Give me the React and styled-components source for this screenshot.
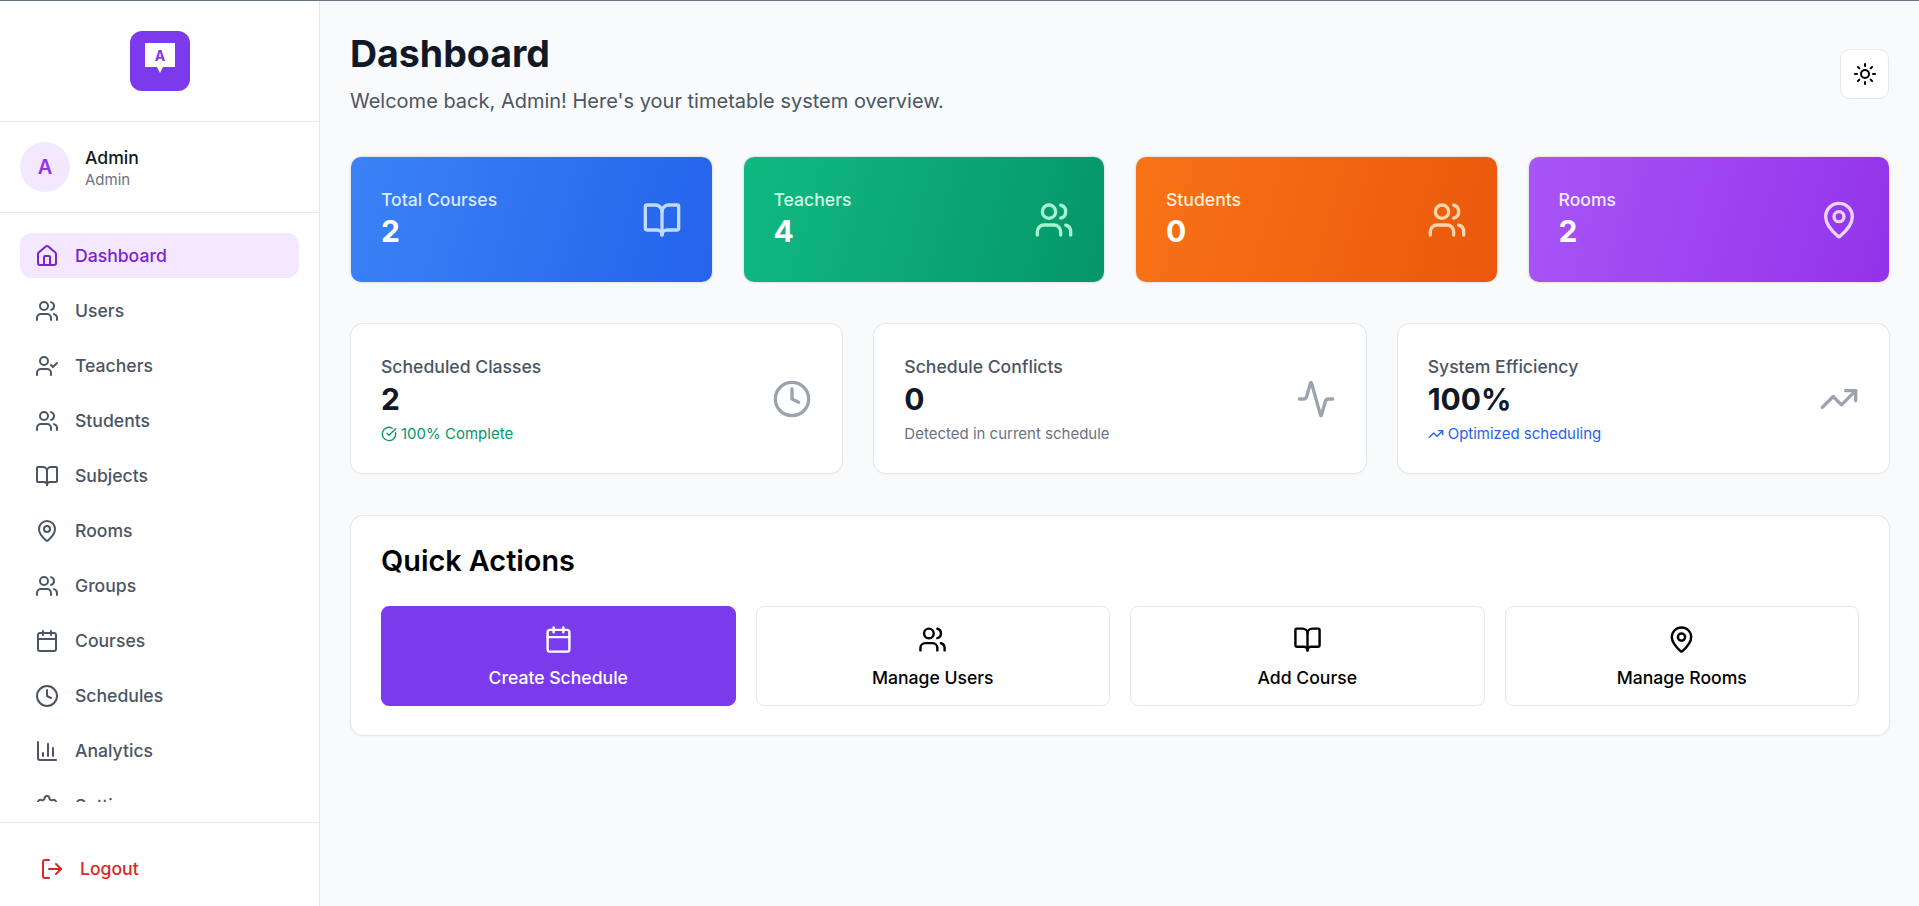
import React from "react";
import styled, { createGlobalStyle } from "styled-components";
import {
  House,
  Users,
  UserCheck,
  BookOpen,
  MapPin,
  Calendar,
  Clock,
  ChartColumn,
  Settings,
  LogOut,
  Sun,
  CircleCheckBig,
  Activity,
  TrendingUp,
} from "lucide-react";

const GlobalStyle = createGlobalStyle`
  * { box-sizing: border-box; }
  html, body { margin: 0; padding: 0; height: 100%; }
  body {
    font-family: "Inter", "Liberation Sans", sans-serif;
    background: #f9fafb;
    color: #111827;
    overflow: hidden;
  }
`;

const Layout = styled.div`
  display: flex;
  height: 906px;
  border-top: 1px solid #6b7280;
`;

const Sidebar = styled.aside`
  width: 320px;
  flex-shrink: 0;
  display: flex;
  flex-direction: column;
  background: #fff;
  border-right: 1px solid #e5e7eb;
`;

const LogoBlock = styled.div`
  height: 121px;
  padding-left: 1px;
  display: flex;
  align-items: center;
  justify-content: center;
  border-bottom: 1px solid #e5e7eb;
`;

const LogoMark = styled.div`
  width: 60px;
  height: 60px;
  border-radius: 12px;
  background: #7c3aed;
  display: flex;
  align-items: center;
  justify-content: center;
`;

const Bubble = styled.div`
  position: relative;
  width: 30px;
  height: 24px;
  margin-bottom: 12px;
  background: #fff;
  color: #7c3aed;
  font-size: 14px;
  font-weight: 700;
  line-height: 26px;
  text-align: center;

  &::after {
    content: "";
    position: absolute;
    left: 12px;
    top: 24px;
    border-left: 3px solid transparent;
    border-right: 3px solid transparent;
    border-top: 6px solid #fff;
  }
`;

const UserBlock = styled.div`
  height: 91px;
  padding: 0 20px;
  display: flex;
  align-items: center;
  gap: 15px;
  border-bottom: 1px solid #e5e7eb;
`;

const Avatar = styled.div`
  width: 50px;
  height: 50px;
  border-radius: 50%;
  background: #f3e8ff;
  color: #9333ea;
  font-size: 20px;
  font-weight: 600;
  display: flex;
  align-items: center;
  justify-content: center;
`;

const UserText = styled.div`
  padding-top: 2px;
`;

const UserName = styled.div`
  font-size: 17.6px;
  font-weight: 500;
  line-height: 24px;
  color: #111827;
`;

const UserRole = styled.div`
  font-size: 15px;
  line-height: 20px;
  color: #6b7280;
`;

const Nav = styled.nav`
  flex: 1;
  min-height: 0;
  margin-bottom: 20px;
  padding: 20px 20px 0;
  overflow: hidden;
  display: flex;
  flex-direction: column;
  gap: 10px;
`;

const NavItem = styled.a`
  flex-shrink: 0;
  height: 45px;
  padding: 0 15px;
  display: flex;
  align-items: center;
  gap: 16px;
  border-radius: 12px;
  font-size: 17.6px;
  font-weight: 500;
  background: ${(p) => (p.$active ? "#f3e8ff" : "transparent")};
  color: ${(p) => (p.$active ? "#7e22ce" : "#4b5563")};
`;

const SidebarFooter = styled.div`
  height: 84px;
  padding: 8px 40px 0;
  display: flex;
  align-items: center;
  gap: 16px;
  border-top: 1px solid #e5e7eb;
  color: #dc2626;
  font-size: 17.6px;
  font-weight: 500;
`;

const Main = styled.main`
  flex: 1;
  min-width: 0;
  padding: 30px 30px 30px 31px;
  display: flex;
  flex-direction: column;
`;

const PageHead = styled.header`
  height: 86px;
  display: flex;
  align-items: center;
  justify-content: space-between;
  margin-bottom: 40px;
`;

const HeadText = styled.div`
  margin-left: -1px;
  padding-bottom: 4px;
`;

const Title = styled.h1`
  margin: 0 0 12px;
  font-size: 37.5px;
  font-weight: 700;
  line-height: 46px;
  color: #111827;
`;

const Subtitle = styled.p`
  margin: 0;
  font-size: 20px;
  line-height: 24px;
  color: #4b5563;
`;

const ThemeButton = styled.button`
  width: 49px;
  height: 50px;
  padding: 0;
  display: flex;
  align-items: center;
  justify-content: center;
  background: #fff;
  border: 1px solid #e5e7eb;
  border-radius: 10px;
  color: #000;
`;

const ColorGrid = styled.section`
  display: grid;
  grid-template-columns: repeat(4, 1fr);
  gap: 32px;
  margin-bottom: 42px;
`;

const ColorCard = styled.div`
  height: 125px;
  padding: 0 30px;
  display: flex;
  align-items: center;
  justify-content: space-between;
  border-radius: 10px;
  background: linear-gradient(105deg, ${(p) => p.$from}, ${(p) => p.$to});
  box-shadow: 0 0 3px rgba(0, 0, 0, 0.2);
  color: ${(p) => p.$soft};
`;

const ColorText = styled.div`
  padding-bottom: 4px;
`;

const ColorLabel = styled.div`
  font-size: 17.6px;
  font-weight: 500;
  line-height: 27px;
`;

const ColorValue = styled.div`
  font-size: 30px;
  font-weight: 700;
  line-height: 36px;
  color: #fff;
`;

const MetricGrid = styled.section`
  display: grid;
  grid-template-columns: repeat(3, 1fr);
  gap: 32px;
  margin-bottom: 43px;
`;

const MetricCard = styled.div`
  height: 149px;
  padding: 0 30px;
  display: flex;
  align-items: center;
  justify-content: space-between;
  background: #fff;
  border-radius: 12px;
  box-shadow: 0 0 0 1px #e5e7eb, 0 1px 3px rgba(0, 0, 0, 0.06);
  color: #9ca3af;
`;

const MetricLabel = styled.div`
  font-size: 17.6px;
  font-weight: 500;
  line-height: 27px;
  color: #4b5563;
`;

const MetricValue = styled.div`
  margin-top: 1px;
  font-size: 30px;
  font-weight: 700;
  line-height: 36px;
  color: #111827;
`;

const MetricNote = styled.div`
  margin-top: 6px;
  display: flex;
  align-items: center;
  gap: 4px;
  font-size: 15px;
  line-height: 22px;
  color: ${(p) => p.$color};
`;

const ActionsCard = styled.section`
  height: 219px;
  padding: 29px 30px;
  background: #fff;
  border-radius: 12px;
  box-shadow: 0 0 0 1px #e5e7eb, 0 1px 3px rgba(0, 0, 0, 0.06);
`;

const ActionsTitle = styled.h2`
  margin: 0 0 29px;
  font-size: 28.8px;
  font-weight: 600;
  line-height: 32px;
  color: #000;
`;

const ActionGrid = styled.div`
  display: grid;
  grid-template-columns: repeat(4, 1fr);
  gap: 20px;
`;

const ActionButton = styled.button`
  height: 100px;
  padding: 3px 0 0;
  display: flex;
  flex-direction: column;
  align-items: center;
  justify-content: center;
  gap: 10px;
  font-family: inherit;
  font-size: 17.6px;
  font-weight: 500;
  line-height: 27px;
  border-radius: 8px;
  border: 1px solid ${(p) => (p.$primary ? "#7c3aed" : "#e5e7eb")};
  background: ${(p) => (p.$primary ? "#7c3aed" : "#fff")};
  color: ${(p) => (p.$primary ? "#fff" : "#000")};
`;

const navItems = [
  ["Dashboard", House],
  ["Users", Users],
  ["Teachers", UserCheck],
  ["Students", Users],
  ["Subjects", BookOpen],
  ["Rooms", MapPin],
  ["Groups", Users],
  ["Courses", Calendar],
  ["Schedules", Clock],
  ["Analytics", ChartColumn],
  ["Settings", Settings],
];

const colorCards = [
  { label: "Total Courses", value: 2, Icon: BookOpen, from: "#3b82f6", to: "#2563eb", soft: "#dbeafe", icon: "#bfdbfe" },
  { label: "Teachers", value: 4, Icon: Users, from: "#10b981", to: "#059669", soft: "#d1fae5", icon: "#a7f3d0" },
  { label: "Students", value: 0, Icon: Users, from: "#f97316", to: "#ea580c", soft: "#ffedd5", icon: "#fed7aa" },
  { label: "Rooms", value: 2, Icon: MapPin, from: "#a855f7", to: "#9333ea", soft: "#f3e8ff", icon: "#e9d5ff" },
];

const actions = [
  { label: "Create Schedule", Icon: Calendar, primary: true },
  { label: "Manage Users", Icon: Users },
  { label: "Add Course", Icon: BookOpen },
  { label: "Manage Rooms", Icon: MapPin },
];

const App = () => (
  <>
    <GlobalStyle />
    <Layout>
      <Sidebar>
        <LogoBlock>
          <LogoMark>
            <Bubble>A</Bubble>
          </LogoMark>
        </LogoBlock>
        <UserBlock>
          <Avatar>A</Avatar>
          <UserText>
            <UserName>Admin</UserName>
            <UserRole>Admin</UserRole>
          </UserText>
        </UserBlock>
        <Nav>
          {navItems.map(([label, Icon]) => (
            <NavItem key={label} $active={label === "Dashboard"}>
              <Icon size={24} />
              {label}
            </NavItem>
          ))}
        </Nav>
        <SidebarFooter>
          <LogOut size={24} />
          Logout
        </SidebarFooter>
      </Sidebar>
      <Main>
        <PageHead>
          <HeadText>
            <Title>Dashboard</Title>
            <Subtitle>Welcome back, Admin! Here's your timetable system overview.</Subtitle>
          </HeadText>
          <ThemeButton>
            <Sun size={24} />
          </ThemeButton>
        </PageHead>
        <ColorGrid>
          {colorCards.map(({ label, value, Icon, from, to, soft, icon }) => (
            <ColorCard key={label} $from={from} $to={to} $soft={soft}>
              <ColorText>
                <ColorLabel>{label}</ColorLabel>
                <ColorValue>{value}</ColorValue>
              </ColorText>
              <Icon size={40} color={icon} />
            </ColorCard>
          ))}
        </ColorGrid>
        <MetricGrid>
          <MetricCard>
            <div>
              <MetricLabel>Scheduled Classes</MetricLabel>
              <MetricValue>2</MetricValue>
              <MetricNote $color="#059669">
                <CircleCheckBig size={16} />
                100% Complete
              </MetricNote>
            </div>
            <Clock size={40} />
          </MetricCard>
          <MetricCard>
            <div>
              <MetricLabel>Schedule Conflicts</MetricLabel>
              <MetricValue>0</MetricValue>
              <MetricNote $color="#6b7280">Detected in current schedule</MetricNote>
            </div>
            <Activity size={40} />
          </MetricCard>
          <MetricCard>
            <div>
              <MetricLabel>System Efficiency</MetricLabel>
              <MetricValue>100%</MetricValue>
              <MetricNote $color="#2563eb">
                <TrendingUp size={16} />
                Optimized scheduling
              </MetricNote>
            </div>
            <TrendingUp size={40} />
          </MetricCard>
        </MetricGrid>
        <ActionsCard>
          <ActionsTitle>Quick Actions</ActionsTitle>
          <ActionGrid>
            {actions.map(({ label, Icon, primary }) => (
              <ActionButton key={label} $primary={primary}>
                <Icon size={29} />
                {label}
              </ActionButton>
            ))}
          </ActionGrid>
        </ActionsCard>
      </Main>
    </Layout>
  </>
);

export default App;
